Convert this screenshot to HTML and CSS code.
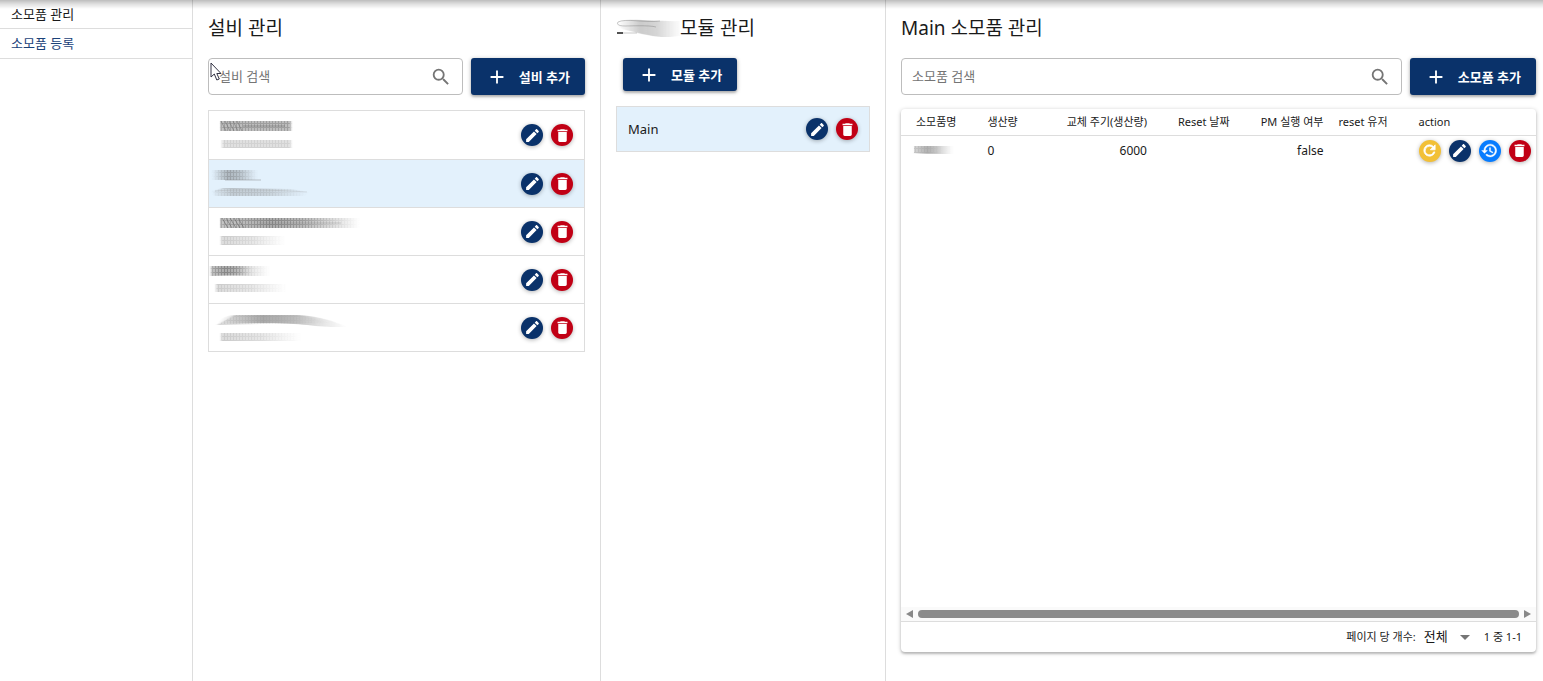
FILE: index.html
```html
<!DOCTYPE html>
<html lang="ko">
<head>
<meta charset="utf-8">
<title>소모품 관리</title>
<link rel="stylesheet" href="styles.css">
</head>
<body>
<svg class="defs" width="0" height="0" aria-hidden="true">
  <defs>
    <linearGradient id="fade"><stop offset="0" stop-color="#555" stop-opacity=".6"/><stop offset=".5" stop-color="#555" stop-opacity=".4"/><stop offset="1" stop-color="#666" stop-opacity="0"/></linearGradient>
    <linearGradient id="soft"><stop offset="0" stop-color="#777" stop-opacity=".1"/><stop offset=".2" stop-color="#777" stop-opacity=".5"/><stop offset=".6" stop-color="#777" stop-opacity=".4"/><stop offset="1" stop-color="#777" stop-opacity="0"/></linearGradient>
    <linearGradient id="both"><stop offset="0" stop-color="#444" stop-opacity="0"/><stop offset=".35" stop-color="#444" stop-opacity=".55"/><stop offset=".6" stop-color="#444" stop-opacity=".45"/><stop offset="1" stop-color="#555" stop-opacity="0"/></linearGradient>
    <pattern id="mesh" width="3" height="4" patternUnits="userSpaceOnUse"><rect width="3" height="4" fill="#999"/><path d="M0 0h1v4H0zM0 0h3v1H0z" fill="#ddd"/></pattern>
    <mask id="weave" maskUnits="userSpaceOnUse" x="0" y="0" width="160" height="50"><rect width="160" height="50" fill="url(#mesh)"/></mask>
    <filter id="blur" x="-20%" y="-50%" width="140%" height="200%"><feGaussianBlur stdDeviation="1.2 .5"/></filter>
    <symbol id="pencil" viewBox="0 0 24 24"><path fill="currentColor" d="M20.71 7.04c.39-.39.39-1.04 0-1.41l-2.34-2.34c-.37-.39-1.02-.39-1.41 0l-1.84 1.83 3.75 3.75M3 17.25V21h3.75L17.81 9.93l-3.75-3.75L3 17.25z"/></symbol>
    <symbol id="trash" viewBox="0 0 24 24"><path fill="currentColor" d="M6 19c0 1.1.9 2 2 2h8c1.1 0 2-.9 2-2V7H6v12zM19 4h-3.500l-1-1h-5l-1 1H5v2h14V4z"/></symbol>
    <symbol id="refresh" viewBox="0 0 24 24"><path fill="currentColor" stroke="currentColor" d="M17.650 6.350A7.960 7.960 0 0 0 12 4a8 8 0 1 0 7.730 10h-2.080A6 6 0 1 1 12 6c1.660 0 3.140.69 4.220 1.780L13 11h7V4l-2.350 2.350z"/></symbol>
    <symbol id="history" viewBox="0 0 24 24"><path fill="currentColor" stroke="currentColor" stroke-width=".6" d="M13 3a9 9 0 0 0-9 9H1l3.890 3.890.07.14L9 12H6a7 7 0 1 1 2.060 4.940l-1.420 1.420A9 9 0 1 0 13 3zm-1 5v5l4.280 2.540.72-1.210-3.500-2.080V8H12z"/></symbol>
    <symbol id="plus" viewBox="0 0 24 24"><path fill="currentColor" d="M19 13h-6v6h-2v-6H5v-2h6V5h2v6h6v2z"/></symbol>
    <symbol id="search" viewBox="0 0 24 24"><path fill="currentColor" d="M15.500 14h-.79l-.28-.27A6.470 6.470 0 0 0 16 9.500 6.500 6.500 0 1 0 9.500 16c1.610 0 3.090-.59 4.230-1.570l.27.28v.79l5 4.990L20.490 19l-4.990-5zm-6 0a4.500 4.500 0 1 1 0-9 4.500 4.500 0 0 1 0 9z"/></symbol>
  </defs>
</svg>

<div class="layout">
  <nav class="sidebar">
    <a href="#manage" class="current">소모품 관리</a>
    <a href="#register">소모품 등록</a>
  </nav>

  <section class="panel">
    <h2>설비 관리</h2>
    <div class="toolbar">
      <div class="field">
        <input type="text" aria-label="설비 검색" placeholder="설비 검색">
        <svg class="icon"><use href="#search"/></svg>
        <svg class="cursor" viewBox="0 0 12 19"><path d="M1 1v14l3.300-3 2.500 6 2.500-1-2.500-5.500H11z" fill="#fff" stroke="#334" stroke-width="1"/></svg>
      </div>
      <button class="add"><svg class="icon"><use href="#plus"/></svg>설비 추가</button>
    </div>
    <ul class="list">
      <li>
        <svg class="name" viewBox="0 0 160 48"><g mask="url(#weave)" filter="url(#blur)"><path d="M12 10h70v10H12z" fill="#777" opacity=".8"/><path d="M13 29h69v8H13z" fill="#aaa" opacity=".6"/></g><path d="M12 10l5 10M16 10l5 10M20 10l5 10M24 10l5 10M28 10l5 10M12 10v10M34 15h42" fill="none" stroke="#666" stroke-opacity=".5"/></svg>
        <button class="round navy" aria-label="수정"><svg><use href="#pencil"/></svg></button><button class="round red" aria-label="삭제"><svg><use href="#trash"/></svg></button>
      </li>
      <li class="selected">
        <svg class="name" viewBox="0 0 160 48"><g mask="url(#weave)" filter="url(#blur)"><path d="M3 10h45v10H3z" fill="url(#both)"/><path d="M4 31l10-3 68 1 17 3-5 4H6z" fill="url(#soft)"/></g><path d="M16 20h36" stroke="#777" stroke-opacity=".4"/><path d="M6 31c24-2 62-1 92 1" fill="none" stroke="#999" stroke-opacity=".25"/></svg>
        <button class="round navy" aria-label="수정"><svg><use href="#pencil"/></svg></button><button class="round red" aria-label="삭제"><svg><use href="#trash"/></svg></button>
      </li>
      <li>
        <svg class="name" viewBox="0 0 160 48"><g mask="url(#weave)" filter="url(#blur)"><path d="M12 10h138v10H12z" fill="url(#fade)"/><path d="M12 10h138v10H12z" fill="url(#both)"/><path d="M12 28h64v9H12z" fill="url(#fade)" opacity=".6"/></g><path d="M12 10v10M13 10l6 10M17 10l6 10M21 10l6 10M25 10l6 10M29 10l6 10" stroke="#555" stroke-opacity=".5"/><path d="M50 15h82" stroke="#777" stroke-opacity=".3"/></svg>
        <button class="round navy" aria-label="수정"><svg><use href="#pencil"/></svg></button><button class="round red" aria-label="삭제"><svg><use href="#trash"/></svg></button>
      </li>
      <li>
        <svg class="name" viewBox="0 0 160 48"><g mask="url(#weave)" filter="url(#blur)"><path d="M2 10h58v10H2z" fill="url(#fade)"/><path d="M2 10h40v9H2z" fill="url(#both)"/><path d="M7 28h70v8H7z" fill="url(#fade)" opacity=".6"/></g></svg>
        <button class="round navy" aria-label="수정"><svg><use href="#pencil"/></svg></button><button class="round red" aria-label="삭제"><svg><use href="#trash"/></svg></button>
      </li>
      <li>
        <svg class="name" viewBox="0 0 160 48"><path d="M8 20c6-7 12-9 18-9h62c22 1 36 6 50 12-30 1-46-5-88-4-16 0-26 1-42 1z" fill="url(#both)" opacity=".7" filter="url(#blur)"/><g mask="url(#weave)" filter="url(#blur)"><path d="M8 21l18-10h65l30 8-70 1z" fill="url(#fade)" opacity=".5"/><path d="M12 29h80v8H12z" fill="url(#fade)" opacity=".6"/></g></svg>
        <button class="round navy" aria-label="수정"><svg><use href="#pencil"/></svg></button><button class="round red" aria-label="삭제"><svg><use href="#trash"/></svg></button>
      </li>
    </ul>
  </section>

  <section class="panel">
    <h2><svg class="prefix" viewBox="0 0 64 24"><path d="M5 5C15 2 42 6 66 5v14c-18 5-35 0-52-4C5 13-3 9 5 5z" fill="url(#both)" opacity=".5" filter="url(#blur)"/><path d="M44 5c-16 2-34-3-42 1-2 3 2 4 7 4s24-1 31 1M1 17h20" fill="none" stroke="#777" stroke-opacity=".4"/><path d="M1 17h6" stroke="#222" stroke-width="1.500"/></svg>모듈 관리</h2>
    <div class="toolbar inset">
      <button class="add"><svg class="icon"><use href="#plus"/></svg>모듈 추가</button>
    </div>
    <ul class="list compact">
      <li class="selected">
        <span class="label">Main</span>
        <button class="round navy" aria-label="수정"><svg><use href="#pencil"/></svg></button><button class="round red" aria-label="삭제"><svg><use href="#trash"/></svg></button>
      </li>
    </ul>
  </section>

  <section class="panel wide">
    <h2>Main 소모품 관리</h2>
    <div class="toolbar">
      <div class="field">
        <input type="text" aria-label="소모품 검색" placeholder="소모품 검색">
        <svg class="icon"><use href="#search"/></svg>
      </div>
      <button class="add"><svg class="icon"><use href="#plus"/></svg>소모품 추가</button>
    </div>
    <div class="card">
      <div class="table-area">
        <table>
          <colgroup><col class="c-name"><col class="c-output"><col class="c-cycle"><col class="c-date"><col class="c-pm"><col class="c-user"><col></colgroup>
          <thead>
            <tr><th>소모품명</th><th>생산량</th><th class="num">교체 주기(생산량)</th><th class="num">Reset 날짜</th><th class="num">PM 실행 여부</th><th>reset 유저</th><th>action</th></tr>
          </thead>
          <tbody>
            <tr>
              <td><svg class="part" viewBox="0 0 44 14"><path d="M1 2h40v8H1z" fill="url(#both)" opacity=".6" filter="url(#blur)"/><path d="M2 2h28v7H2z" fill="url(#fade)" opacity=".6" mask="url(#weave)"/></svg></td>
              <td>0</td><td class="num">6000</td><td></td><td class="num">false</td><td></td>
              <td><div class="actions"><button class="round yellow" aria-label="초기화"><svg><use href="#refresh"/></svg></button><button class="round navy" aria-label="수정"><svg><use href="#pencil"/></svg></button><button class="round blue" aria-label="이력"><svg><use href="#history"/></svg></button><button class="round red" aria-label="삭제"><svg><use href="#trash"/></svg></button></div></td>
            </tr>
          </tbody>
        </table>
      </div>
      <div class="scroll">
        <svg viewBox="0 0 7 8"><path d="M7 0v8L0 4z"/></svg>
        <div class="thumb"></div>
        <svg viewBox="0 0 7 8"><path d="M0 0v8L7 4z"/></svg>
      </div>
      <footer>
        <label for="per-page">페이지 당 개수:</label>
        <span class="select"><select id="per-page"><option>전체</option></select><svg viewBox="0 0 10 5"><path d="M0 0h10L5 5z"/></svg></span>
        <span>1 중 1-1</span>
      </footer>
    </div>
  </section>
</div>
</body>
</html>
```

FILE: styles.css
```css
* { box-sizing: border-box; }

body {
  margin: 0;
  background: #fff;
  color: #1a1a1a;
  font: 13px/20px "Noto Sans", "Noto Sans CJK KR", sans-serif;
}

body::before {
  content: "";
  position: fixed;
  inset: 0 0 auto;
  height: 9px;
  background: linear-gradient(rgba(0, 0, 0, .26), rgba(0, 0, 0, .12) 45%, transparent);
  pointer-events: none;
}

button, input, select { font: inherit; color: inherit; }
button { border: 0; cursor: pointer; }
svg { display: block; flex: none; }
.defs { position: absolute; }

.layout {
  display: grid;
  grid-template-columns: 193fr 408fr 285fr 657fr;
  min-height: 100vh;
}

.sidebar { border-right: 1px solid #ddd; }
.sidebar a {
  display: block;
  padding: 5px 11px;
  border-bottom: 1px solid #ddd;
  line-height: 19px;
  color: #1b4279;
  text-decoration: none;
}
.sidebar .current { padding-bottom: 4px; color: #1a1a1a; }

.panel {
  display: flex;
  flex-direction: column;
  min-width: 0;
  padding: 14px 15px 29px;
  border-right: 1px solid #ddd;
}
.panel.wide { padding-right: 7px; border-right: 0; }

h2 {
  display: flex;
  align-items: center;
  margin: 0 0 16px;
  font-size: 19px;
  font-weight: 400;
  line-height: 28px;
}
.prefix { width: 64px; height: 24px; }

.toolbar { display: flex; gap: 8px; margin-bottom: 15px; }
.toolbar.inset { padding-left: 7px; }
.toolbar.inset .add { height: 33px; }

.field {
  position: relative;
  display: flex;
  align-items: center;
  flex: 1;
  min-width: 0;
  height: 37px;
  padding: 0 10px;
  border: 1px solid #bdbdbd;
  border-radius: 4px;
}
.field input {
  flex: 1;
  min-width: 0;
  padding: 0 0 2px;
  border: 0;
  outline: 0;
  background: none;
}
.field input::placeholder { color: #757575; opacity: 1; }
.field .icon { color: #757575; }
.icon { width: 22px; height: 22px; }
.cursor { position: absolute; left: 1px; top: 3px; width: 12px; height: 19px; }

.add {
  display: flex;
  align-items: center;
  gap: 11px;
  height: 37px;
  padding: 0 15px;
  border-radius: 3px;
  background: #0a326a;
  color: #fff;
  font-weight: 600;
  line-height: 18px;
  white-space: nowrap;
  box-shadow: 0 1px 4px rgba(0, 0, 0, .3), 0 2px 2px rgba(0, 0, 0, .14);
}

.list {
  margin: 0;
  padding: 0;
  list-style: none;
  border: 1px solid #ddd;
}
.list li {
  display: flex;
  align-items: center;
  gap: 8px;
  height: 48px;
  padding-right: 11px;
}
.list li + li { border-top: 1px solid #ddd; }
.list.compact li { height: 44px; }
.list .selected { background: #e3f1fc; }
.name { width: 160px; height: 48px; margin-right: auto; }
.label { padding-left: 11px; margin-right: auto; }

.round {
  display: grid;
  place-items: center;
  flex: none;
  width: 22px;
  height: 22px;
  padding: 0;
  border-radius: 50%;
  color: #fff;
  box-shadow: 0 1px 4px rgba(0, 0, 0, .3);
}
.round svg { width: 17px; height: 17px; }
.navy { background: #0a326a; }
.red { background: #c10015; }
.yellow { background: #f2c037; }
.blue { background: #077cff; }

.card {
  display: flex;
  flex: 1;
  flex-direction: column;
  margin-top: -1px;
  border-radius: 4px;
  box-shadow: 0 1px 4px rgba(0, 0, 0, .25), 0 2px 2px rgba(0, 0, 0, .14);
}
.table-area { flex: 1; }
table { width: 100%; border-collapse: collapse; table-layout: fixed; }
th, td { padding: 1px 0 0 7px; text-align: left; white-space: nowrap; }
th { height: 26px; border-bottom: 1px solid #ddd; font-size: 11px; font-weight: 400; }
td { height: 30px; font-size: 12px; }
th:first-child { padding-left: 15px; }
td:first-child { padding-left: 11px; }
.num { padding: 1px 8px 0 0; text-align: right; }
.c-name { width: 12.500%; }
.c-output { width: 12%; }
.c-cycle { width: 15.500%; }
.c-date { width: 13%; }
.c-pm { width: 14.800%; }
.c-user { width: 12.600%; }
.part { width: 44px; height: 14px; }
.actions { display: flex; gap: 8px; }

.scroll {
  display: flex;
  align-items: center;
  gap: 5px;
  height: 15px;
  padding: 0 5px;
  background: #fafafa;
  border-bottom: 1px solid #ddd;
}
.scroll svg { width: 7px; height: 8px; fill: #888; }
.thumb { flex: 1; height: 8px; border-radius: 4px; background: #8b8b8b; }

footer {
  display: flex;
  align-items: center;
  justify-content: flex-end;
  height: 30px;
  padding-right: 14px;
  font-size: 11px;
}
.select { display: flex; align-items: center; gap: 12px; margin: 0 14px 0 8px; }
.select select { appearance: none; padding: 0 0 2px; border: 0; background: none; font-size: 13px; }
.select svg { width: 10px; height: 5px; fill: #757575; }
```
